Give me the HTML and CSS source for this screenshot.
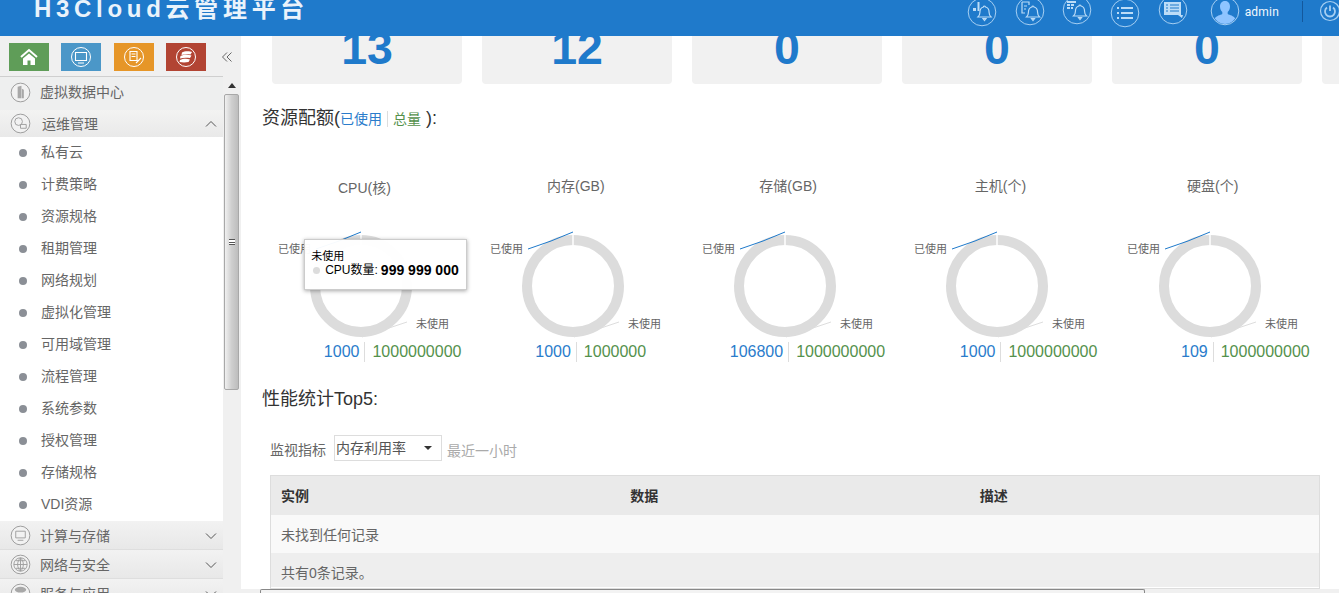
FILE: index.html
```html
<!DOCTYPE html>
<html lang="zh-CN">
<head>
<meta charset="utf-8">
<title>H3Cloud云管理平台</title>
<link rel="stylesheet" href="styles.css">
</head>
<body>
<svg class="defs" aria-hidden="true">
  <symbol id="ring" viewBox="0 0 210 144">
    <circle cx="102" cy="90" r="46" fill="none" stroke="#dcdcdc" stroke-width="10"/>
    <line x1="102" y1="39" x2="102" y2="49" stroke="#fff" stroke-width="1.5"/>
    <polyline points="102,36 80,45 57,53" fill="none" stroke="#1f7acb" stroke-width="1"/>
    <polyline points="103,141 130,132 148,126" fill="none" stroke="#dddddd" stroke-width="1"/>
  </symbol>
  <symbol id="bell" viewBox="0 0 16 18">
    <path d="M8 2a1 1 0 0 1 1 1c3 .6 3.600 3 3.600 5.500 0 2 .8 3.500 2 4.500H1.400c1.200-1 2-2.500 2-4.500C3.400 6 4 3.600 7 3a1 1 0 0 1 1-1zM6.500 14.500h3L8 16.500z" fill="none" stroke="#bcdcf7" stroke-width="1.200"/>
  </symbol>
</svg>

<header class="topbar">
  <div class="brand">H3Cloud云管理平台</div>
  <div class="top-icons">
    <svg class="ti ti-a" viewBox="0 0 30 30"><circle cx="15" cy="15" r="13.800"/><use href="#bell" x="9.500" y="7" width="16" height="18"/><path class="fl" d="M6 11h3v3H6zM10.500 5h2v9h-2z"/></svg>
    <svg class="ti ti-b" viewBox="0 0 30 30"><circle cx="15" cy="15" r="13.800"/><use href="#bell" x="10" y="8" width="16" height="18"/><path class="ln" d="M7 6h7v3M7 6v11h3M9 10h3M9 13h2"/></svg>
    <svg class="ti ti-c" viewBox="0 0 30 30"><circle cx="15" cy="15" r="13.800"/><use href="#bell" x="10" y="8" width="16" height="18"/><path class="fl" d="M5 6h9v2H5zM5 9h3v2H5zM9 9h3v2H9zM5 12h3v2H5zM9 12h2v2H9z"/></svg>
    <svg class="ti ti-d" viewBox="0 0 30 30"><circle cx="15" cy="15" r="13.800"/><path class="fl" d="M7 9h2v2H7zM11 9h12v2H11zM7 14h2v2H7zM11 14h12v2H11zM7 19h2v2H7zM11 19h12v2H11z"/></svg>
    <svg class="ti ti-e" viewBox="0 0 30 30"><circle cx="15" cy="15" r="13.800"/><path class="fl" d="M6 7h17v13h2l-1 3-4-3H6z"/><path class="cut" d="M12 10h9M12 13h9M12 16h9M8 10h2M8 13h2M8 16h2"/></svg>
    <div class="user">
      <svg class="ti-user" viewBox="0 0 30 30"><circle class="ucirc" cx="15" cy="15" r="13.800"/><path class="uperson" d="M15 5c3.400 0 5 2.600 5 5.600 0 2.400-1 4.400-2.300 5.400v2c2 1.200 6 1.600 7.500 4.600A13 13 0 0 1 15 28a13 13 0 0 1-10.200-5.400c1.500-3 5.500-3.400 7.500-4.600v-2C11 15 10 13 10 10.600 10 7.600 11.600 5 15 5z"/></svg>
      <span class="uname">admin</span>
    </div>
    <span class="top-div"></span>
    <svg class="ti-power" viewBox="0 0 22 22"><circle cx="11" cy="11" r="9.500"/><path d="M8 7.500a5 5 0 1 0 6 0M11 5.500v5.500"/></svg>
  </div>
</header>

<div class="layout">
  <aside class="sidebar">
    <div class="tools">
      <a class="tool tool-green"><svg viewBox="0 0 40 28"><path class="ic-s" d="M12 14l8-7 8 7"/><path class="ic-f" d="M14 15.500l6-5 6 5V22h-4.500v-4.500h-3V22H14z"/></svg></a>
      <a class="tool tool-blue"><svg viewBox="0 0 40 28"><circle class="ic-c" cx="20" cy="14" r="9.500"/><path class="ic-t" d="M14.500 9.500h11v8h-11zM17 20h6"/></svg></a>
      <a class="tool tool-orange"><svg viewBox="0 0 40 28"><circle class="ic-c" cx="20" cy="14" r="9.500"/><path class="ic-t" d="M16 8.500h7v9h-7zM17.500 11h4M17.500 13.500h4M22 20l5-5"/></svg></a>
      <a class="tool tool-red"><svg viewBox="0 0 40 28"><circle class="ic-c" cx="20" cy="14" r="9.500"/><path class="ic-f" d="M16 9.500c2-1.500 8-1.500 10-.5l-1.500 2.500c-3-.5-6-.5-9 .5zM14.500 13c3-1.500 8-1.500 11-.5L24 15c-3-.5-7-.5-10 .5zM14 17c3-1.500 7-1.500 10-.5L22.500 19c-3 .5-6 .5-9 0z"/></svg></a>
      <svg class="collapse" viewBox="0 0 12 12"><path d="M6 1.500L1.500 6 6 10.500M10.500 1.500L6 6l4.500 4.500"/></svg>
    </div>
    <div class="menu-wrap">
      <nav class="menu">
        <div class="group group-plain">
          <svg class="gi" viewBox="0 0 22 22"><circle cx="11" cy="11" r="9.800"/><path class="gf" d="M8 5l4-1v13H8zM12.500 7l2 1v9h-2z"/></svg>
          <span>虚拟数据中心</span>
        </div>
        <div class="group group-open">
          <svg class="gi" viewBox="0 0 22 22"><circle cx="11" cy="11" r="9.800"/><circle class="gs" cx="9" cy="9" r="4"/><path class="gs" d="M11 12h6v4h-6z"/></svg>
          <span class="open-label">运维管理</span>
          <svg class="chev" viewBox="0 0 12 8"><path d="M1 6.500l5-5 5 5"/></svg>
        </div>
        <ul class="subs">
          <li>私有云</li>
          <li>计费策略</li>
          <li>资源规格</li>
          <li>租期管理</li>
          <li>网络规划</li>
          <li>虚拟化管理</li>
          <li>可用域管理</li>
          <li>流程管理</li>
          <li>系统参数</li>
          <li>授权管理</li>
          <li>存储规格</li>
          <li>VDI资源</li>
        </ul>
        <div class="group">
          <svg class="gi" viewBox="0 0 22 22"><circle cx="11" cy="11" r="9.800"/><path class="gs" d="M6 6.500h10v7H6zM8 16h6"/></svg>
          <span>计算与存储</span>
          <svg class="chev" viewBox="0 0 12 8"><path d="M1 1.500l5 5 5-5"/></svg>
        </div>
        <div class="group">
          <svg class="gi" viewBox="0 0 22 22"><circle cx="11" cy="11" r="9.800"/><circle class="gs" cx="11" cy="11" r="7"/><path class="gs" d="M4 11h14M11 4v14M6 7h10M6 15h10M11 4c-4 4-4 10 0 14M11 4c4 4 4 10 0 14"/></svg>
          <span>网络与安全</span>
          <svg class="chev" viewBox="0 0 12 8"><path d="M1 1.500l5 5 5-5"/></svg>
        </div>
        <div class="group">
          <svg class="gi" viewBox="0 0 22 22"><circle cx="11" cy="11" r="9.800"/><ellipse class="gf" cx="11" cy="7" rx="6" ry="3"/></svg>
          <span>服务与应用</span>
          <svg class="chev" viewBox="0 0 12 8"><path d="M1 1.500l5 5 5-5"/></svg>
        </div>
      </nav>
      <div class="vscroll">
        <span class="arrow-up"></span>
        <div class="vthumb"><span class="grip"></span></div>
      </div>
    </div>
  </aside>

  <main class="main">
    <div class="content">
      <div class="cards">
        <div class="card"><span>13</span></div>
        <div class="card"><span>12</span></div>
        <div class="card"><span>0</span></div>
        <div class="card"><span>0</span></div>
        <div class="card"><span>0</span></div>
        <div class="card"></div>
      </div>

      <h2 class="heading quota">资源配额(<small class="used">已使用</small><small class="total">总量</small> ):</h2>

      <div class="charts">
        <section class="chart chart-first">
          <h3 class="chart-title title-low">CPU(核)</h3>
          <svg class="donut" viewBox="0 0 210 144">
            <use href="#ring" width="210" height="144"/>
            <text class="lbl" x="19" y="57">已使用</text>
            <text class="lbl" x="157" y="132">未使用</text>
          </svg>
          <div class="vals"><span class="v-used">1000</span><span class="v-total">1000000000</span></div>
          <div class="tip">
            <div class="tip-head">未使用</div>
            <div class="tip-row"><i class="tip-dot"></i>CPU数量: <b>999 999 000</b></div>
          </div>
        </section>
        <section class="chart">
          <h3 class="chart-title">内存(GB)</h3>
          <svg class="donut" viewBox="0 0 210 144">
            <use href="#ring" width="210" height="144"/>
            <text class="lbl" x="19" y="57">已使用</text>
            <text class="lbl" x="157" y="132">未使用</text>
          </svg>
          <div class="vals"><span class="v-used">1000</span><span class="v-total">1000000</span></div>
        </section>
        <section class="chart">
          <h3 class="chart-title">存储(GB)</h3>
          <svg class="donut" viewBox="0 0 210 144">
            <use href="#ring" width="210" height="144"/>
            <text class="lbl" x="19" y="57">已使用</text>
            <text class="lbl" x="157" y="132">未使用</text>
          </svg>
          <div class="vals"><span class="v-used">106800</span><span class="v-total">1000000000</span></div>
        </section>
        <section class="chart">
          <h3 class="chart-title">主机(个)</h3>
          <svg class="donut" viewBox="0 0 210 144">
            <use href="#ring" width="210" height="144"/>
            <text class="lbl" x="19" y="57">已使用</text>
            <text class="lbl" x="157" y="132">未使用</text>
          </svg>
          <div class="vals"><span class="v-used">1000</span><span class="v-total">1000000000</span></div>
        </section>
        <section class="chart">
          <h3 class="chart-title">硬盘(个)</h3>
          <svg class="donut" viewBox="0 0 210 144">
            <use href="#ring" width="210" height="144"/>
            <text class="lbl" x="19" y="57">已使用</text>
            <text class="lbl" x="157" y="132">未使用</text>
          </svg>
          <div class="vals"><span class="v-used">109</span><span class="v-total">1000000000</span></div>
        </section>
      </div>

      <h2 class="heading perf">性能统计Top5:</h2>

      <div class="filter">
        <span class="filter-label">监视指标</span>
        <div class="select"><span>内存利用率</span><i class="caret"></i></div>
        <span class="filter-hint">最近一小时</span>
      </div>

      <div class="grid-wrap">
        <table class="grid">
          <thead>
            <tr><th>实例</th><th>数据</th><th>描述</th></tr>
          </thead>
          <tbody>
            <tr class="row-empty"><td colspan="3">未找到任何记录</td></tr>
            <tr class="row-foot"><td colspan="3">共有0条记录。</td></tr>
          </tbody>
        </table>
      </div>
    </div>
    <div class="hscroll"><div class="hthumb"></div></div>
  </main>
</div>
</body>
</html>
```

FILE: styles.css
```css
* { box-sizing: border-box; }
html, body { margin: 0; padding: 0; height: 593px; overflow: hidden; background: #fff; }
body { font-family: "Liberation Sans", "Noto Sans CJK SC", sans-serif; color: #666; font-size: 14px; display: flex; flex-direction: column; }
.defs { width: 0; height: 0; display: block; overflow: hidden; }

/* top bar */
.topbar { height: 36px; flex: none; background: #1f7acb; display: flex; justify-content: space-between; overflow: hidden; }
.brand { margin: -4px 0 0 34px; font-size: 24px; line-height: 26px; font-weight: bold; letter-spacing: 4.7px; color: #eaf3fb; white-space: nowrap; }
.top-icons { display: flex; align-items: flex-start; margin-right: -1px; }
.ti { width: 30px; height: 30px; flex: none; }
.ti circle { fill: none; stroke: #a6cff2; stroke-width: 1; }
.ti .fl { fill: #bcdcf7; }
.ti .ln { fill: none; stroke: #bcdcf7; stroke-width: 1.2; }
.ti .cut { fill: none; stroke: #1f7acb; stroke-width: 1.2; }
.ti-a { margin-top: -3px; }
.ti-b { margin: -4px 0 0 18px; }
.ti-c { margin: -5px 0 0 17px; }
.ti-d { margin: -2px 0 0 18px; }
.ti-e { margin: -5px 0 0 18px; }
.user { display: flex; align-items: flex-start; margin: -4px 0 0 22px; }
.ti-user { width: 30px; height: 30px; flex: none; }
.ucirc { fill: #1f7acb; stroke: #a6cff2; stroke-width: 1; }
.uperson { fill: #8fc4ff; }
.uname { margin: 8px 0 0 5px; font: 12px/16px Roboto, "Liberation Sans", sans-serif; color: #f2f8fd; letter-spacing: .2px; }
.top-div { width: 1px; height: 21px; margin: 1px 0 0 23px; background: #14589c; }
.ti-power { width: 22px; height: 22px; margin: 0 -1px 0 16px; flex: none; fill: none; stroke: #a6cff2; stroke-width: 1.2; }
.ti-power path { stroke-width: 1.800; }

/* layout */
.layout { flex: 1; display: flex; min-height: 0; }
.sidebar { width: 241px; flex: none; background: #f0f0f0; display: flex; flex-direction: column; min-height: 0; }
.tools { height: 41px; flex: none; width: 223px; display: flex; align-items: flex-start; padding: 7px 0 0 9px; border-bottom: 1px solid #cfcfcf; }
.tool { width: 40px; height: 28px; flex: none; margin-right: 12.300px; display: block; }
.tool svg { display: block; width: 40px; height: 28px; }
.tool-green { background: #5f9d58; }
.tool-blue { background: #4b97c8; }
.tool-orange { background: #e69628; }
.tool-red { background: #b24433; }
.ic-s { fill: none; stroke: #fff; stroke-width: 2; }
.ic-f { fill: #fff; }
.ic-c { fill: none; stroke: #fff; stroke-width: 1; }
.ic-t { fill: none; stroke: #fff; stroke-width: 1.100; }
.collapse { width: 12px; height: 12px; flex: none; margin: 8px 0 0 3px; fill: none; stroke: #666; stroke-width: 1; }

.menu-wrap { flex: 1; display: flex; min-height: 0; }
.menu { width: 223px; flex: none; background: #fff; overflow: hidden; }
.group { height: 29px; display: flex; align-items: center; padding: 1px 6px 0 10px; background: linear-gradient(#f2f2f2, #e8e8e8); border-bottom: 1px solid #dedede; color: #666; font-size: 14px; line-height: 20px; }
.group span { flex: 1; margin-left: 9px; white-space: nowrap; }
.group .open-label { margin-left: 11px; }
.group-plain { height: 33px; padding: 0 6px 3px 10px; background: #eeefef; border-bottom: 0; }
.group-open { height: 27px; padding-top: 0; background: linear-gradient(#f3f3f2, #e9e9e9); border-bottom: 0; }
.gi { width: 21px; height: 21px; flex: none; fill: #f2f2f2; stroke: #9a9a9a; stroke-width: 1; }
.gi .gf { fill: #a8a8a8; stroke: none; }
.gi .gs { fill: none; stroke: #a0a0a0; stroke-width: 1; }
.chev { width: 12px; height: 8px; flex: none; fill: none; stroke: #555; stroke-width: 1; }
.subs { list-style: none; margin: 0; padding: 0; height: 384px; }
.subs li { height: 32px; line-height: 30px; padding-left: 41px; color: #666; position: relative; white-space: nowrap; }
.subs li::before { content: ""; position: absolute; left: 19px; top: 12px; width: 8px; height: 8px; border-radius: 50%; background: #8b8f96; }

.vscroll { flex: 1; padding: 0 2px 0 1px; display: flex; flex-direction: column; align-items: stretch; }
.arrow-up { width: 0; height: 0; margin: 6px auto 5px; border: 4px solid transparent; border-top: 0; border-bottom: 5px solid #333; }
.vthumb { height: 296px; margin-top: 1px; border: 1px solid #a8a8a8; border-radius: 2px; background: linear-gradient(90deg, #f0f0f0, #cfcfcf 50%, #bdbdbd); display: flex; align-items: center; justify-content: center; }
.grip { width: 6px; height: 6px; border-top: 1px solid #555; border-bottom: 1px solid #555; background: linear-gradient(#fff 2px, #555 2px, #555 3px, #fff 3px); }

/* main */
.main { flex: 1; min-width: 0; display: flex; flex-direction: column; }
.content { flex: 1; min-height: 0; overflow: hidden; }
.cards { display: flex; gap: 20px; height: 48px; margin-left: 31px; width: 1200px; }
.card { width: 190px; flex: none; background: #f1f1f1; border-radius: 0 0 4px 4px; text-align: center; overflow: hidden; }
.card span { display: block; margin-top: -14px; font-size: 46.500px; line-height: 52px; font-weight: bold; color: #1f7acb; }

.heading { margin: 0; font-weight: normal; font-size: 18px; line-height: 28px; color: #333; }
.quota { margin: 20px 0 0 21px; }
.quota small { font-size: 14px; }
.used { color: #2a7ccb; padding-right: 5px; border-right: 1px solid #ddd; }
.total { color: #54914c; margin-left: 5px; padding-right: 0; }
.perf { margin: 23px 0 0 21px; }

.charts { display: flex; margin: 43px 0 0 18.200px; }
.chart { width: 212.300px; flex: none; position: relative; }
.chart-first { width: 210.500px; }
.chart-title { margin: 0; text-align: center; font-weight: normal; font-size: 14px; line-height: 20px; color: #666; }
.title-low { transform: translateY(2px); }
.donut { display: block; width: 210px; height: 144px; margin: 0 auto; }
.lbl { font-size: 11px; fill: #666; }
.vals { display: grid; grid-template-columns: 1fr 1fr; margin: 2px 0 0 0; height: 20px; line-height: 20px; font-size: 16px; }
.v-used { text-align: right; padding-right: 5px; color: #2a7ccb; border-right: 1px solid #ddd; margin-right: -1px; }
.v-total { padding-left: 8px; color: #54914c; white-space: nowrap; }

.tip { position: absolute; left: 45px; top: 63px; width: 163px; height: 51px; padding: 10px 7px 0 6px; background: rgba(255,255,255,.96); border: 1px solid #ccc; box-shadow: 0 1px 4px rgba(0,0,0,.35); color: #000; font-size: 11px; line-height: 13px; }
.tip-row { margin-top: -1px; font-size: 12px; line-height: 16px; white-space: nowrap; display: flex; align-items: center; }
.tip-row b { font-size: 14px; margin-left: 3px; }
.tip-dot { width: 7px; height: 7px; margin: 0 5px 0 2px; border-radius: 50%; background: #dcdcdc; }

.filter { display: flex; align-items: center; margin: 22px 0 0 29px; height: 26px; }
.filter-label { color: #666; line-height: 20px; padding-top: 3px; }
.select { width: 108px; height: 26px; margin-left: 8px; border: 1px solid #ddd; display: flex; justify-content: space-between; align-items: center; padding: 0 9px 3px 1px; color: #555; }
.caret { width: 0; height: 0; margin-top: 3px; border: 4px solid transparent; border-bottom: 0; border-top: 4px solid #333; }
.filter-hint { margin-left: 5px; color: #aaa; padding-top: 3px; }

.grid-wrap { width: 1050px; margin: 14px 0 0 29px; border: 1px solid #ddd; padding-bottom: 1px; }
.grid { border-collapse: collapse; table-layout: fixed; width: 100%; font-size: 14px; }
.grid th { height: 39px; background: #eaeaea; text-align: left; padding: 0 10px 2px; color: #333; }
.grid td { padding: 0 10px; color: #666; }
.row-empty td { height: 38px; background: #f9f9f9; }
.grid .row-foot td { height: 34px; padding-top: 4px; background: #eee; }

.hscroll { height: 4px; flex: none; background: #f0f0f0; padding-left: 19px; }
.hthumb { width: 885px; height: 4px; background: #f3f3f3; border: 1px solid #888; border-bottom: 0; border-radius: 2px 2px 0 0; }
```
